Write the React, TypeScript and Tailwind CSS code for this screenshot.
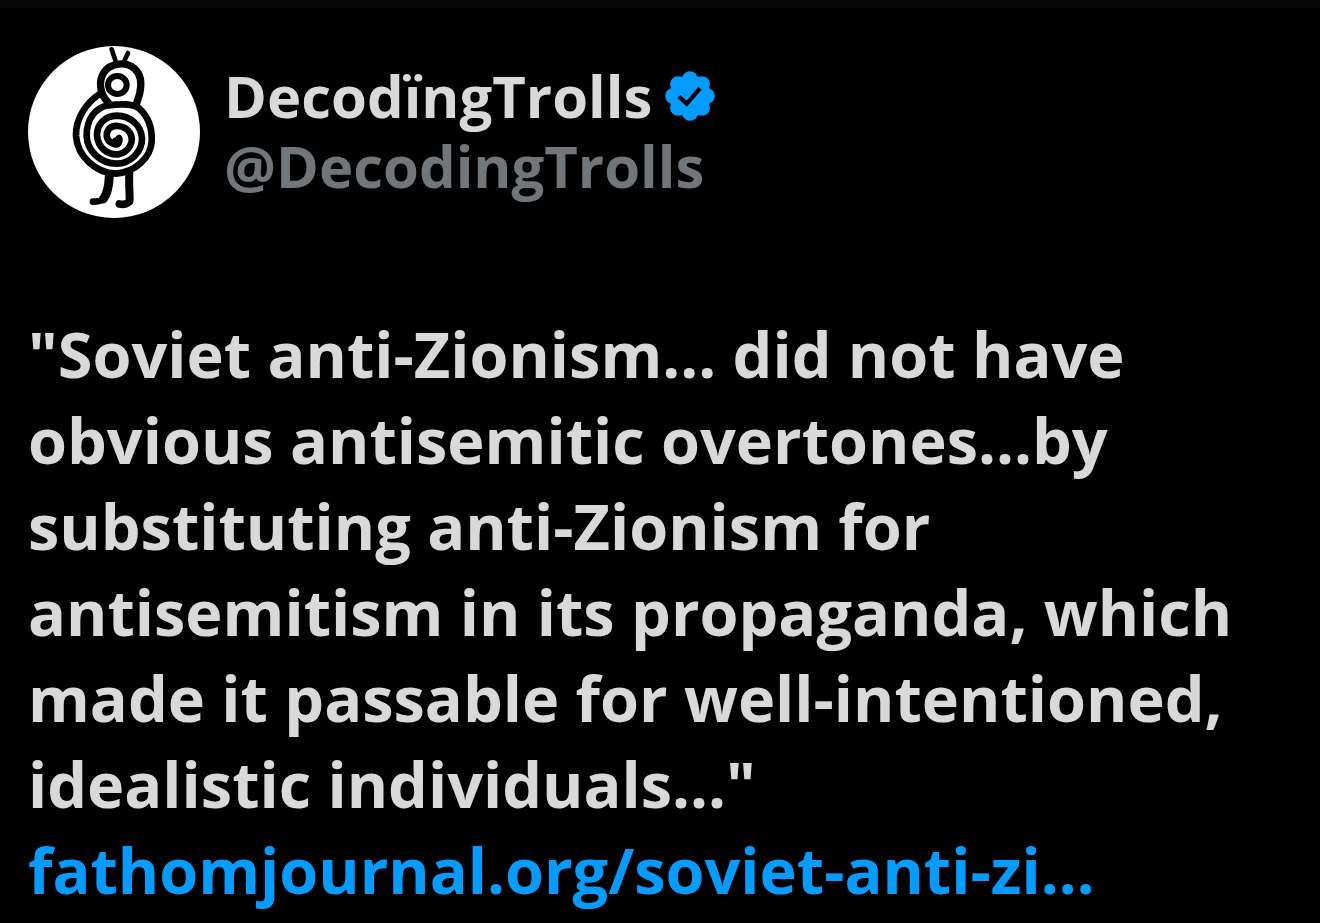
function Avatar() {
  return (
    <svg viewBox="24 29 516 516" className="size-[172px] shrink-0" role="img" aria-label="DecodïngTrolls avatar">
      <circle cx="282" cy="287" r="258" fill="#fff" />
      <g fill="none" stroke="#050505" strokeWidth="20" strokeLinecap="round" strokeLinejoin="round">
        <path strokeWidth="14" d="M275 39L286 72M324 50L314 72" />
        <path strokeWidth="22" d="M264 198C240 174 234 135 252 108C271 80 318 74 344 97C366 116 365 145 359 172L349 204" />
        <ellipse cx="292" cy="146" rx="28" ry="27" strokeWidth="18" />
        <path d="M297 305C302 318 292 326 282 323C262 317 257 300 262 286C273 259 315 266 330 290C345 316 326 347 295 354C260 357 234 331 231 298C230 263 256 239 290 238C333 239 364 268 366 307C366 347 331 381 290 382C242 382 202 344 200 300C199 247 227 214 265 207C300 203 338 200 357 216C386 242 397 280 395 316C392 365 344 408 288 412C228 411 172 360 168 298C166 247 200 199 238 174" />
        <path strokeWidth="27" d="M268 418C267 445 264 471 250 488" />
        <path strokeWidth="20" d="M250 488C242 496 229 496 219 496" />
        <path strokeWidth="24" d="M328 410C326 438 329 465 329 489" />
        <path strokeWidth="23" d="M328 496C318 504 306 505 298 503" />
      </g>
      <circle cx="290" cy="318" r="16" fill="#050505" />
    </svg>
  );
}

function VerifiedBadge() {
  return (
    <svg viewBox="1 1 22 22" className="size-[52px] shrink-0" role="img" aria-label="Verified account">
      <g fill="#069bff">
        <circle cx="12" cy="12" r="8.9" />
        <circle cx="12" cy="4.8" r="3.3" />
        <circle cx="17.1" cy="6.9" r="3.3" />
        <circle cx="19.2" cy="12" r="3.3" />
        <circle cx="17.1" cy="17.1" r="3.3" />
        <circle cx="12" cy="19.2" r="3.3" />
        <circle cx="6.9" cy="17.1" r="3.3" />
        <circle cx="4.8" cy="12" r="3.3" />
        <circle cx="6.9" cy="6.9" r="3.3" />
      </g>
      <path d="M7.3 12.2L10.6 15.3L16.2 8.8" fill="none" stroke="#000" strokeWidth="1.8" />
    </svg>
  );
}

const quote = [
  '"Soviet anti-Zionism... did not have',
  "obvious antisemitic overtones...by",
  "substituting anti-Zionism for",
  "antisemitism in its propaganda, which",
  "made it passable for well-intentioned,",
  'idealistic individuals..."',
];

export default function App() {
  return (
    <main className="min-h-screen overflow-x-hidden border-t-8 border-[#080808] bg-black font-['Open_Sans',sans-serif] font-bold text-[#d9d9d9]">
      <article className="px-7 pt-[38px]">
        <header className="flex items-start gap-6">
          <Avatar />
          <div className="pt-[15px] text-[58px] leading-[70px]">
            <div className="flex items-center gap-3">
              <h1>DecodïngTrolls</h1>
              <VerifiedBadge />
            </div>
            <p className="text-[#71767b]">@DecodingTrolls</p>
          </div>
        </header>
        <div className="pt-[93px] text-[63px] leading-[86px] whitespace-nowrap">
          <p>
            {quote.map((line) => (
              <span key={line} className="block">{line}</span>
            ))}
          </p>
          <a href="https://fathomjournal.org/" className="block text-[#069bff]">
            fathomjournal.org/soviet-anti-zi…
          </a>
        </div>
      </article>
    </main>
  );
}
